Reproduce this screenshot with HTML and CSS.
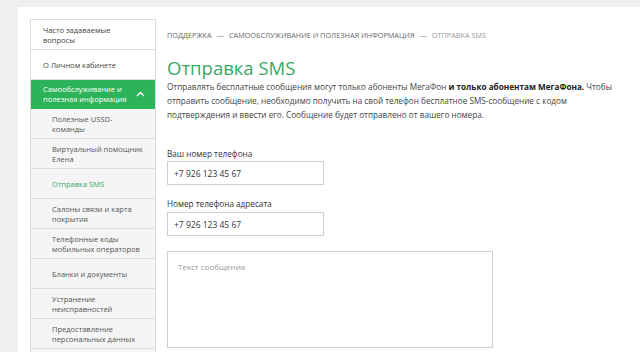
FILE: index.html
```html
<!DOCTYPE html>
<html lang="ru">
<head>
<meta charset="utf-8">
<link rel="stylesheet" href="styles.css">
</head>
<body>
<div class="page">
  <aside class="side">
    <div class="item">Часто задаваемые вопросы</div>
    <div class="item">О Личном кабинете</div>
    <div class="item active">
      <span>Самообслуживание и полезная информация</span>
      <svg class="chev" width="9" height="6" viewBox="0 0 9 6"><path d="M1 5 L4.5 1.5 L8 5" fill="none" stroke="#fff" stroke-width="1.4"/></svg>
    </div>
    <div class="sub"><span>Полезные USSD-<br>команды</span></div>
    <div class="sub"><span>Виртуальный помощник<br>Елена</span></div>
    <div class="sub current">Отправка SMS</div>
    <div class="sub"><span>Салоны связи и карта<br>покрытия</span></div>
    <div class="sub"><span>Телефонные коды<br>мобильных операторов</span></div>
    <div class="sub">Бланки и документы</div>
    <div class="sub"><span>Устранение<br>неисправностей</span></div>
    <div class="sub"><span>Предоставление<br>персональных данных</span></div>
    <div class="sub">Настройки</div>
  </aside>
  <main class="main">
    <div class="crumbs"><span>Поддержка</span><span class="arr">—</span><span>Самообслуживание и полезная информация</span><span class="arr">—</span><span class="last">Отправка SMS</span></div>
    <h1 class="title">Отправка SMS</h1>
    <p class="lead">Отправлять бесплатные сообщения могут только абоненты МегаФон <b>и только абонентам МегаФона.</b> Чтобы отправить сообщение, необходимо получить на свой телефон бесплатное SMS-сообщение с кодом подтверждения и ввести его. Сообщение будет отправлено от вашего номера.</p>
    <div class="field first">
      <div class="label">Ваш номер телефона</div>
      <div class="input">+7 926 123 45 67</div>
    </div>
    <div class="field">
      <div class="label">Номер телефона адресата</div>
      <div class="input">+7 926 123 45 67</div>
    </div>
    <div class="textarea">Текст сообщения</div>
  </main>
</div>
</body>
</html>
```

FILE: styles.css
```css
html, body {
  margin: 0;
  padding: 0;
  height: 100%;
  overflow: hidden;
}
body {
  background: #efefef;
  font-family: "Open Sans", "Liberation Sans", sans-serif;
  color: #333;
}
.page {
  margin: 7px 0 0 18px;
  background: #fff;
  height: 400px;
  display: flex;
  align-items: flex-start;
  padding: 12px 0 0 12px;
}
.side {
  width: 124px;
  border: 1px solid #dcdcdc;
  border-bottom: none;
  flex-shrink: 0;
}
.item, .sub {
  height: 29px;
  display: flex;
  align-items: center;
  font-size: 7.5px;
  line-height: 10px;
  border-bottom: 1px solid #dcdcdc;
  box-sizing: content-box;
}
.item {
  padding: 0 14px 0 12px;
  background: #fff;
  color: #444;
}
.item.active {
  background: #2db35a;
  color: #fff;
  border-bottom-color: #2db35a;
  justify-content: space-between;
  height: 28px;
}
.item.active span { padding-right: 6px; }
.chev { flex-shrink: 0; margin-right: -4px; }
.sub {
  background: #f5f5f5;
  padding: 0 3px 0 21px;
  color: #555;
}
.sub.current { color: #3aa866; }
.main {
  margin-left: 11px;
  width: 460px;
  padding-top: 11px;
}
.crumbs {
  font-size: 7.3px;
  text-transform: uppercase;
  color: #666;
  line-height: 10px;
  white-space: nowrap;
}
.crumbs .arr { margin: 0 5px; color: #888; }
.crumbs .last { color: #999; }
.title {
  margin: 16px 0 0;
  font-size: 18.5px;
  font-weight: 400;
  color: #3aa866;
  line-height: 24px;
}
.lead {
  margin: 0;
  font-size: 8.2px;
  line-height: 14px;
  color: #444;
}
.lead b { color: #222; font-weight: 700; }
.field { margin-top: 14px; }
.field.first { margin-top: 27px; }
.label {
  font-size: 8.2px;
  color: #333;
  line-height: 10px;
}
.input {
  margin-top: 2px;
  width: 149px;
  height: 22px;
  border: 1px solid #cfcfcf;
  padding-left: 6px;
  display: flex;
  align-items: center;
  font-size: 8.5px;
  color: #333;
}
.field + .field .input { margin-top: 3px; }
.textarea {
  margin-top: 15px;
  width: 314px;
  height: 86px;
  border: 1px solid #cfcfcf;
  padding: 9px 0 0 10px;
  font-size: 8px;
  color: #999;
}
```
